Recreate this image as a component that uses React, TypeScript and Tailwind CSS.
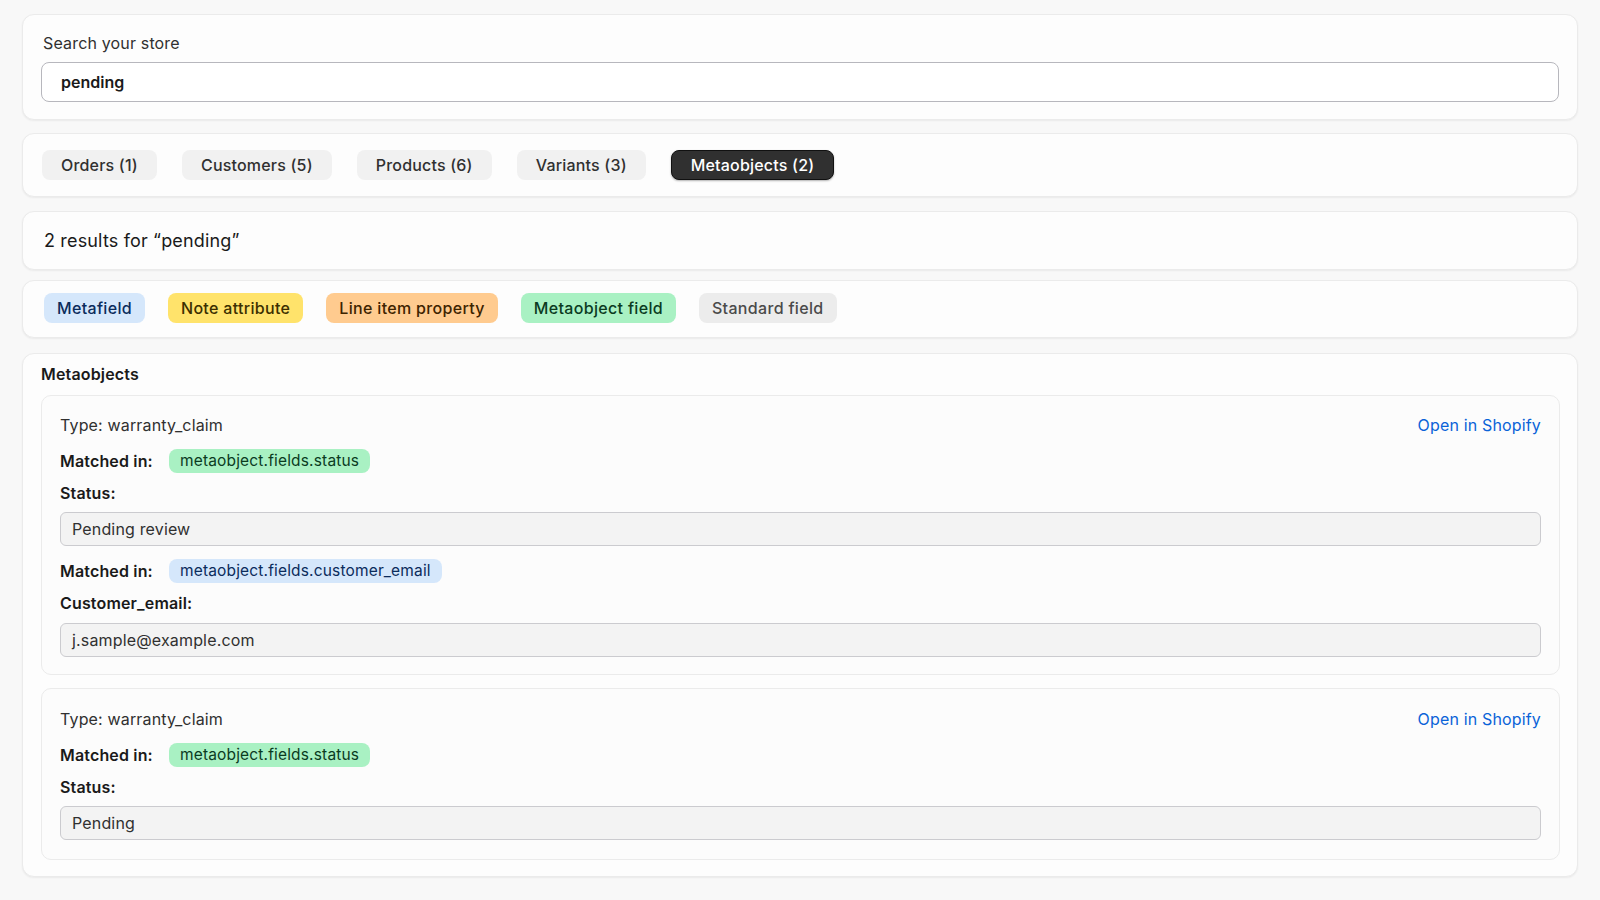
import React from 'react';

const tabs = [
  { label: 'Orders (1)', active: false },
  { label: 'Customers (5)', active: false },
  { label: 'Products (6)', active: false },
  { label: 'Variants (3)', active: false },
  { label: 'Metaobjects (2)', active: true },
];

const legend = [
  { label: 'Metafield', cls: 'bg-[#d5e7fb] text-[#0b2c5c]' },
  { label: 'Note attribute', cls: 'bg-[#ffe36b] text-[#3b2f00]' },
  { label: 'Line item property', cls: 'bg-[#ffcb8f] text-[#3d2300]' },
  { label: 'Metaobject field', cls: 'bg-[#a9f1c3] text-[#0b3b1f]' },
  { label: 'Standard field', cls: 'bg-[#ececec] text-[#4a4a4a]' },
];

const card = 'rounded-[12px] bg-[#fdfdfd] border border-[#ebebeb] shadow-[0_1px_2px_rgba(0,0,0,0.06)]';

function Matched({ field, tone }: { field: string; tone: 'green' | 'blue' }) {
  return (
    <div className="flex items-center h-[24px]">
      <span className="w-[109px] text-[16px] font-semibold text-[#1a1a1a]">Matched in:</span>
      <span
        className={
          tone === 'green'
            ? 'h-[24px] flex items-center px-[11px] rounded-[8px] text-[15.5px] bg-[#a9f1c3] text-[#0b3b1f]'
            : 'h-[24px] flex items-center px-[11px] rounded-[8px] text-[15.5px] bg-[#d5e7fb] text-[#0b2c5c]'
        }
      >
        {field}
      </span>
    </div>
  );
}

function Field({ value }: { value: string }) {
  return (
    <div className="h-[34px] flex items-center px-[11px] rounded-[6px] bg-[#f3f3f3] border border-[#cbcbcf] text-[16px] text-[#303030]">
      {value}
    </div>
  );
}

function ResultHeader() {
  return (
    <div className="flex items-center justify-between h-[20px]">
      <span className="text-[16px] text-[#303030]">Type: warranty_claim</span>
      <a className="text-[16px] text-[#0a63d8] cursor-pointer">Open in Shopify</a>
    </div>
  );
}

export default function App() {
  return (
    <div
      className="min-h-screen bg-[#f8f8f8] pl-[22px] pr-[22px] pt-[14px] pb-[24px] text-[#303030] tracking-[0.01em]"
      style={{ fontFamily: 'Inter, "Noto Sans", sans-serif' }}
    >
      {/* search */}
      <div className={`${card} px-[18px] pt-[18px] pb-[17px]`}>
        <div className="ml-[2px] text-[16px] leading-[20px] text-[#303030] mb-[9px]">Search your store</div>
        <div className="h-[40px] flex items-center px-[19px] rounded-[8px] bg-white border border-[#b7b7bd] text-[16px] font-semibold text-[#1a1a1a] tracking-normal">
          pending
        </div>
      </div>

      {/* tabs */}
      <div className={`${card} mt-[13px] px-[19px] py-[16px] flex gap-[25px]`}>
        {tabs.map(t => (
          <div
            key={t.label}
            className={
              t.active
                ? 'h-[30px] flex items-center px-[19px] rounded-[8px] bg-[#303030] border border-[#111] text-white text-[16px] font-medium tracking-[0.012em] shadow-[0_1px_2px_rgba(0,0,0,0.3)]'
                : 'h-[30px] flex items-center px-[19px] rounded-[8px] bg-[#f1f1f1] text-[#303030] text-[16px] font-medium tracking-[0.012em]'
            }
          >
            {t.label}
          </div>
        ))}
      </div>

      {/* summary */}
      <div className={`${card} mt-[14px] h-[59px] px-[21px] flex items-center`}>
        <span className="text-[18px] text-[#1a1a1a]">2 results for “pending”</span>
      </div>

      {/* legend */}
      <div className={`${card} mt-[10px] h-[58px] pl-[21px] pt-[12px] flex items-start gap-[23px]`}>
        {legend.map(l => (
          <span key={l.label} className={`h-[30px] flex items-center px-[13px] rounded-[8px] text-[16px] font-medium tracking-[0.02em] ${l.cls}`}>
            {l.label}
          </span>
        ))}
      </div>

      {/* results */}
      <div className={`${card} mt-[15px] pl-[18px] pr-[17px] pt-[10px] pb-[16px]`}>
        <div className="text-[16px] leading-[20px] font-semibold text-[#1a1a1a]">Metaobjects</div>

        <div className="mt-[11px] rounded-[10px] border border-[#ebebeb] bg-[#fcfcfc] px-[18px] pt-[19px] pb-[17px]">
          <ResultHeader />
          <div className="mt-[14px]">
            <Matched field="metaobject.fields.status" tone="green" />
          </div>
          <div className="mt-[10px] text-[16px] leading-[20px] font-semibold text-[#1a1a1a]">Status:</div>
          <div className="mt-[9px]">
            <Field value="Pending review" />
          </div>
          <div className="mt-[13px]">
            <Matched field="metaobject.fields.customer_email" tone="blue" />
          </div>
          <div className="mt-[10px] text-[16px] leading-[20px] font-semibold text-[#1a1a1a]">Customer_email:</div>
          <div className="mt-[10px]">
            <Field value="j.sample@example.com" />
          </div>
        </div>

        <div className="mt-[13px] rounded-[10px] border border-[#ebebeb] bg-[#fcfcfc] px-[18px] pt-[20px] pb-[19px]">
          <ResultHeader />
          <div className="mt-[14px]">
            <Matched field="metaobject.fields.status" tone="green" />
          </div>
          <div className="mt-[10px] text-[16px] leading-[20px] font-semibold text-[#1a1a1a]">Status:</div>
          <div className="mt-[9px]">
            <Field value="Pending" />
          </div>
        </div>
      </div>
    </div>
  );
}
